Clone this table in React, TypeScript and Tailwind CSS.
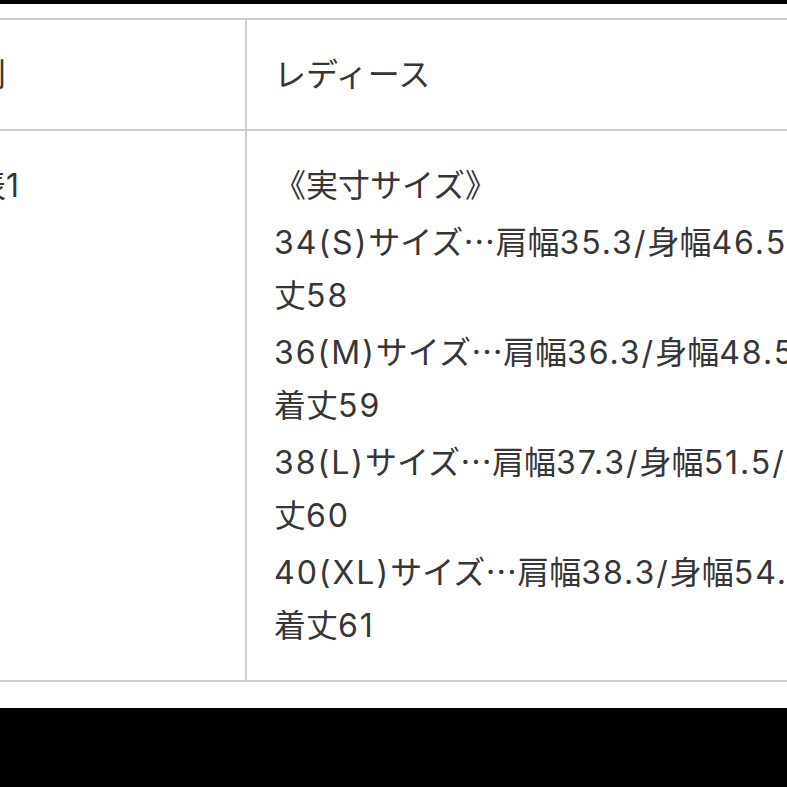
import React from 'react'

type Line = { pre: string; post?: string }

// size lines are split at the ellipsis so it can use the CJK font (centred dots)
const sizeLines: Line[] = [
  { pre: '《実寸サイズ》' },
  { pre: '34(S)サイズ', post: '肩幅35.3/身幅46.5/着' },
  { pre: '丈58' },
  { pre: '36(M)サイズ', post: '肩幅36.3/身幅48.5/' },
  { pre: '着丈59' },
  { pre: '38(L)サイズ', post: '肩幅37.3/身幅51.5/着' },
  { pre: '丈60' },
  { pre: '40(XL)サイズ', post: '肩幅38.3/身幅54.5/' },
  { pre: '着丈61' },
]

// latin runs get a bit of tracking so they are as wide as in the screenshot
function Mixed({ text }: { text: string }) {
  const parts = text.split(/([0-9A-Za-z().\/]+)/)
  return (
    <>
      {parts.map((p, i) =>
        /^[0-9A-Za-z().\/]+$/.test(p) ? (
          <span key={i} className="tracking-[2px]">
            {p}
          </span>
        ) : (
          <React.Fragment key={i}>{p}</React.Fragment>
        )
      )}
    </>
  )
}

export default function App() {
  return (
    <div
      lang="ja"
      className="w-[787px] h-[787px] overflow-hidden bg-white flex flex-col text-[#363636] text-[32px] leading-[55px]"
      style={{ fontFamily: 'Inter, "Noto Sans CJK JP", sans-serif' }}
    >
      <div className="h-[4px] bg-black shrink-0" />
      <div className="h-[14px] shrink-0" />

      {/* spec table, cropped on both sides like the screenshot */}
      <div className="ml-[-85px] w-[1200px] shrink-0 border-t-2 border-[#cdcdcd]">
        <div className="grid grid-cols-[332px_1fr] border-b-2 border-[#cdcdcd]">
          <div className="p-[27px] border-r-2 border-[#cdcdcd]">
            <div className="h-[55px] whitespace-nowrap">性別</div>
          </div>
          <div className="p-[27px]">
            <div className="h-[55px] whitespace-nowrap">レディース</div>
          </div>
        </div>
        <div className="grid grid-cols-[332px_1fr] border-b-2 border-[#cdcdcd]">
          <div className="p-[27px] border-r-2 border-[#cdcdcd]">
            <div className="h-[55px] whitespace-nowrap">
              <Mixed text="別表1" />
            </div>
          </div>
          <div className="p-[27px] flex flex-col">
            {sizeLines.map((line) => (
              <div key={line.pre} className="h-[55px] whitespace-nowrap">
                <Mixed text={line.pre} />
                {line.post && (
                  <>
                    <span style={{ fontFamily: '"Noto Sans CJK JP", sans-serif' }}>…</span>
                    <Mixed text={line.post} />
                  </>
                )}
              </div>
            ))}
          </div>
        </div>
      </div>

      <div className="flex-1 bg-white" />
      <div className="h-[79px] bg-black shrink-0" />
    </div>
  )
}
